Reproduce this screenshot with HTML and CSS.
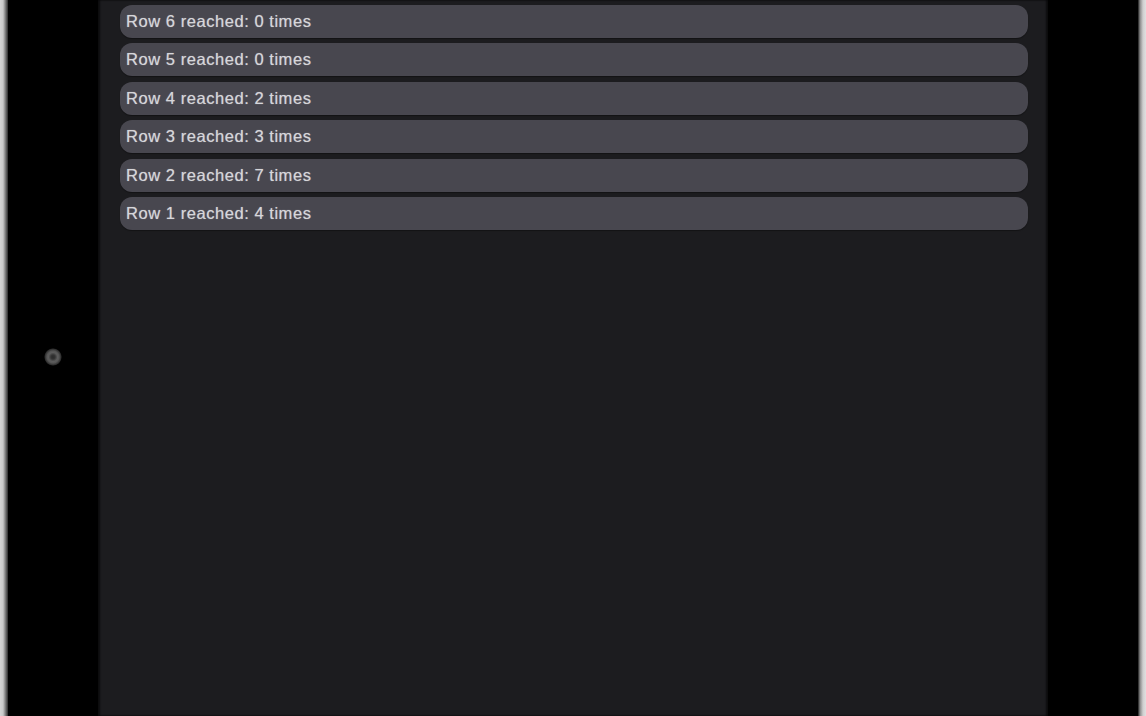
FILE: index.html
```html
<!DOCTYPE html>
<html>
<head>
<meta charset="utf-8">
<link rel="stylesheet" href="styles.css">
</head>
<body>
<div class="device">
  <div class="edge edge-left"></div>
  <div class="bezel bezel-left"><div class="camera"></div></div>
  <main class="screen">
    <ul class="rows">
      <li class="row">Row 6 reached: 0 times</li>
      <li class="row">Row 5 reached: 0 times</li>
      <li class="row">Row 4 reached: 2 times</li>
      <li class="row">Row 3 reached: 3 times</li>
      <li class="row">Row 2 reached: 7 times</li>
      <li class="row">Row 1 reached: 4 times</li>
    </ul>
  </main>
  <div class="bezel bezel-right"></div>
  <div class="edge edge-right"></div>
</div>
</body>
</html>
```

FILE: styles.css
```css
html, body {
  margin: 0;
  padding: 0;
  background: #000;
}
.device {
  display: flex;
  width: 1146px;
  height: 716px;
  overflow: hidden;
}
.edge {
  flex: none;
  width: 8px;
  height: 100%;
}
.edge-left {
  background: linear-gradient(to right, #d4d4d4 0, #c8c8c8 3px, #8a8a8a 5px, #2a2a2a 8px);
}
.edge-right {
  background: linear-gradient(to left, #e0e0e0 0, #cfcfcf 3px, #8a8a8a 6px, #1a1a1a 8px);
}
.bezel {
  flex: none;
  height: 100%;
  background: #000;
}
.bezel-left {
  width: 90px;
  display: flex;
  align-items: center;
  justify-content: center;
}
.bezel-right {
  width: 90px;
}
.camera {
  width: 18px;
  height: 18px;
  border-radius: 50%;
  background: radial-gradient(circle, #2a2a2a 0, #333 2px, #5c5c5c 4.5px, #555 6px, #2e2e2e 8px, #000 9px);
  margin-left: 0;
  margin-top: -2px;
}
.screen {
  flex: 1;
  height: 100%;
  background: #1c1c1f;
  box-shadow: inset 2px 0 2px rgba(0,0,0,0.6), inset -2px 0 2px rgba(0,0,0,0.6);
  padding: 4.5px 20px 0 22px;
  box-sizing: border-box;
}
.rows {
  list-style: none;
  margin: 0;
  padding: 0;
  display: flex;
  flex-direction: column;
  gap: 5.5px;
}
.row {
  height: 33px;
  box-sizing: border-box;
  border-radius: 12px;
  background: #48474f;
  box-shadow: 0 1px 1px rgba(0,0,0,0.35);
  display: flex;
  align-items: center;
  padding-left: 6px;
  font-family: "Liberation Sans", Arial, sans-serif;
  font-size: 16.5px;
  letter-spacing: 0.55px;
  color: #d6d6da;
  text-shadow: 0 0 1px rgba(220,220,225,0.6);
}
```
